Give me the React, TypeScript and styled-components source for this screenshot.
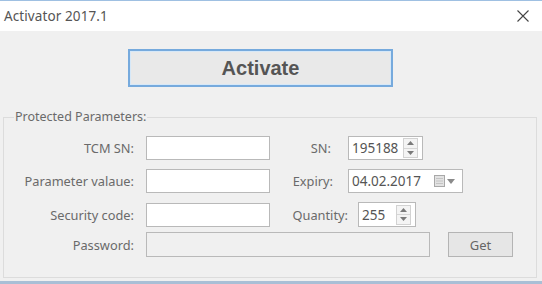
import React from "react";
import styled, { createGlobalStyle } from "styled-components";

const Global = createGlobalStyle`
  html, body { margin: 0; padding: 0; background: #f0f0f0; }
  body { font-family: "Noto Sans", "Liberation Sans", sans-serif; }
  * { box-sizing: border-box; }
`;

const Window = styled.div`
  width: 542px;
  height: 284px;
  background: #f0f0f0;
  display: flex;
  flex-direction: column;
  border-top: 1px solid #9fc0e2;
  border-bottom: 3px solid #a9bfd6;
  overflow: hidden;
`;

const TitleBar = styled.div`
  height: 30px;
  flex: none;
  background: #ffffff;
  display: flex;
  align-items: center;
  justify-content: space-between;
  padding: 0 13px 0 4px;
`;

const Title = styled.div`
  font-size: 13.5px;
  color: #555555;
  letter-spacing: 0.1px;
`;

const Body = styled.div`
  flex: 1;
  display: flex;
  flex-direction: column;
  padding: 18px 5px 0 3px;
`;

const ActivateButton = styled.button`
  margin-left: 125px;
  width: 265px;
  height: 38px;
  background: #e9e9e9;
  border: 2px solid #76aadd;
  box-shadow: inset 0 0 0 1px #d6e8f8;
  font-family: "Liberation Sans", Arial, sans-serif;
  font-weight: bold;
  font-size: 20px;
  color: #555555;
  padding: 0;
`;

const Group = styled.fieldset`
  margin: 23px 0 0 0;
  border: 1px solid #dcdcdc;
  padding: 0 0 20px 0;
  min-width: 0;
`;

const Legend = styled.legend`
  margin-left: 10px;
  padding: 0 1px;
  font-size: 12.5px;
  color: #6a6a6a;
  line-height: 14px;
`;

const Row = styled.div<{ $mt: number }>`
  display: flex;
  align-items: center;
  margin-top: ${(p) => p.$mt}px;
`;

const Label = styled.div`
  width: 130px;
  text-align: right;
  font-size: 12.8px;
  color: #6a6a6a;
  margin-right: 12px;
`;

const RightLabel = styled.div<{ $w: number; $gap: number }>`
  width: ${(p) => p.$w}px;
  margin-right: ${(p) => p.$gap}px;
  text-align: right;
  font-size: 12.8px;
  color: #6a6a6a;
`;

const TextBox = styled.input<{ $w: number; $h?: number; $disabled?: boolean }>`
  width: ${(p) => p.$w}px;
  height: ${(p) => p.$h ?? 24}px;
  border: 1px solid #b9b9b9;
  background: ${(p) => (p.$disabled ? "#f0f0f0" : "#ffffff")};
  padding: 0 3px;
  font-family: "Noto Sans", "Liberation Sans", sans-serif;
  font-size: 13px;
  color: #505050;
  outline: none;
`;

const Field = styled.div<{ $w: number; $h?: number }>`
  width: ${(p) => p.$w}px;
  height: ${(p) => p.$h ?? 24}px;
  border: 1px solid #b9b9b9;
  background: #ffffff;
  display: flex;
  align-items: center;
  justify-content: space-between;
  padding: 0 4px 0 3px;
  font-size: 13.5px;
  color: #555555;
`;

const Spinner = styled.div`
  width: 15px;
  height: 20px;
  display: flex;
  flex-direction: column;
  border: 1px solid #d2d2d2;
  background: #f4f4f4;
`;

const SpinHalf = styled.div`
  flex: 1;
  display: flex;
  align-items: center;
  justify-content: center;
  & + & { border-top: 1px solid #d6d6d6; }
`;

const DateIcons = styled.div`
  display: flex;
  align-items: center;
  gap: 2px;
  margin-right: 3px;
`;

const GetButton = styled.button`
  margin-left: 18px;
  width: 65px;
  height: 25px;
  background: #e6e6e6;
  border: 1px solid #b4b4b4;
  font-family: "Noto Sans", "Liberation Sans", sans-serif;
  font-size: 13px;
  color: #666666;
  padding: 0;
`;

const Up = () => (
  <svg width="7" height="4" viewBox="0 0 7 4">
    <path d="M0 4 L3.5 0 L7 4 Z" fill="#7a7a7a" />
  </svg>
);
const Down = () => (
  <svg width="7" height="4" viewBox="0 0 7 4">
    <path d="M0 0 L3.5 4 L7 0 Z" fill="#7a7a7a" />
  </svg>
);

const Spin = () => (
  <Spinner>
    <SpinHalf><Up /></SpinHalf>
    <SpinHalf><Down /></SpinHalf>
  </Spinner>
);

export default function App() {
  return (
    <>
      <Global />
      <Window>
        <TitleBar>
          <Title>Activator 2017.1</Title>
          <svg width="12" height="12" viewBox="0 0 12 12">
            <path d="M0.5 0.5 L11.5 11.5 M11.5 0.5 L0.5 11.5" stroke="#444" strokeWidth="1.1" />
          </svg>
        </TitleBar>
        <Body>
          <div>
            <ActivateButton>Activate</ActivateButton>
          </div>
          <Group>
            <Legend>Protected Parameters:</Legend>
            <Row $mt={12}>
              <Label>TCM SN:</Label>
              <TextBox $w={124} readOnly defaultValue="" />
              <RightLabel $w={61} $gap={17}>SN:</RightLabel>
              <Field $w={75}>
                <span>195188</span>
                <Spin />
              </Field>
            </Row>
            <Row $mt={9}>
              <Label>Parameter valaue:</Label>
              <TextBox $w={124} readOnly defaultValue="" />
              <RightLabel $w={63} $gap={15}>Expiry:</RightLabel>
              <Field $w={115}>
                <span>04.02.2017</span>
                <DateIcons>
                  <svg width="11" height="12" viewBox="0 0 11 12">
                    <rect x="0.5" y="0.5" width="10" height="11" fill="#e2e2e2" stroke="#a8a8a8" />
                    <path d="M2 3.5 H9 M2 6 H9 M2 8.5 H9" stroke="#c4c4c4" />
                  </svg>
                  <svg width="8" height="5" viewBox="0 0 8 5">
                    <path d="M0 0 L4 5 L8 0 Z" fill="#8a8a8a" />
                  </svg>
                </DateIcons>
              </Field>
            </Row>
            <Row $mt={9}>
              <Label>Security code:</Label>
              <TextBox $w={124} readOnly defaultValue="" />
              <RightLabel $w={78} $gap={10}>Quantity:</RightLabel>
              <Field $w={58} $h={25}>
                <span>255</span>
                <Spin />
              </Field>
            </Row>
            <Row $mt={5}>
              <Label>Password:</Label>
              <TextBox $w={284} $h={25} $disabled readOnly defaultValue="" />
              <GetButton>Get</GetButton>
            </Row>
          </Group>
        </Body>
      </Window>
    </>
  );
}
